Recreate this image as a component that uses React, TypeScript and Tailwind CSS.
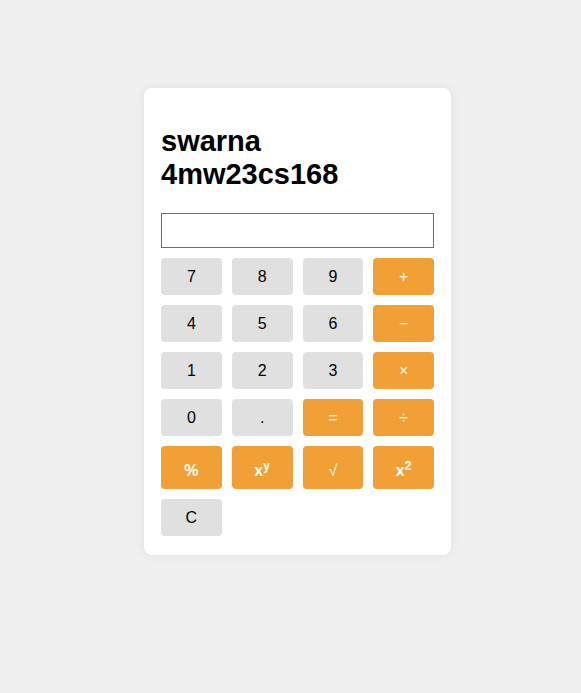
import React from "react";

type Key = { label: React.ReactNode; kind: "num" | "op"; bold?: boolean };

const rows: Key[][] = [
  [
    { label: "7", kind: "num" },
    { label: "8", kind: "num" },
    { label: "9", kind: "num" },
    { label: "+", kind: "op" },
  ],
  [
    { label: "4", kind: "num" },
    { label: "5", kind: "num" },
    { label: "6", kind: "num" },
    { label: "−", kind: "op" },
  ],
  [
    { label: "1", kind: "num" },
    { label: "2", kind: "num" },
    { label: "3", kind: "num" },
    { label: "×", kind: "op" },
  ],
  [
    { label: "0", kind: "num" },
    { label: ".", kind: "num" },
    { label: "=", kind: "op" },
    { label: "÷", kind: "op" },
  ],
];

function KeyButton({ k, tall }: { k: Key; tall?: boolean }) {
  return (
    <button
      className={
        "rounded-[4px] text-[16px] flex items-center justify-center cursor-pointer " +
        (tall ? "h-[43px] pt-[6px] " : "h-[37px] ") +
        (k.kind === "op" ? "bg-[#f0a035] text-white " : "bg-[#e0e0e0] text-black ") +
        (k.bold ? "font-bold" : "")
      }
    >
      {k.label}
    </button>
  );
}

export default function App() {
  const fnRow: Key[] = [
    { label: "%", kind: "op", bold: true },
    { label: <span>x<sup>y</sup></span>, kind: "op", bold: true },
    { label: "√", kind: "op" },
    { label: <span>x<sup>2</sup></span>, kind: "op", bold: true },
  ];

  return (
    <div className="min-h-[693px] bg-[#f0f0f0] pl-[144px] pt-[88px] font-['Liberation_Sans',Arial,sans-serif]">
      <div className="w-[307px] bg-white rounded-[8px] shadow-[0_0_10px_rgba(0,0,0,0.08)] px-[17px] pt-[37px] pb-[19px]">
        <h2 className="text-[29px] font-bold leading-[33px] text-black">
          swarna
          <br />
          4mw23cs168
        </h2>
        <input
          type="text"
          className="mt-[22px] block w-full h-[35px] border border-[#6e6e6e] bg-white outline-none"
        />
        <div className="mt-[10px] grid grid-cols-4 gap-[10px]">
          {rows.flat().map((k, i) => (
            <KeyButton key={i} k={k} />
          ))}
          {fnRow.map((k, i) => (
            <KeyButton key={"f" + i} k={k} tall />
          ))}
          <KeyButton k={{ label: "C", kind: "num" }} />
        </div>
      </div>
    </div>
  );
}
